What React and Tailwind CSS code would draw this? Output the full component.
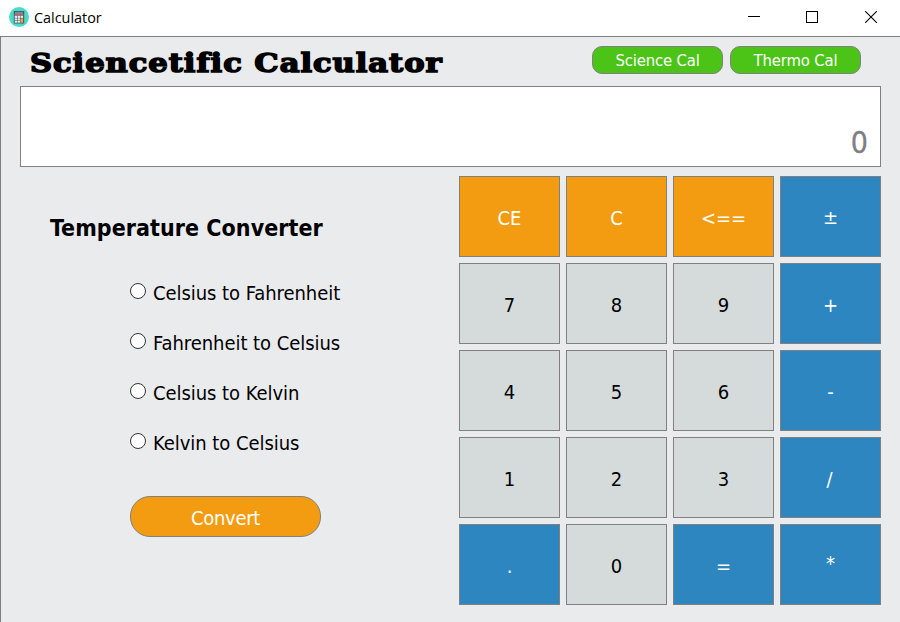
const TONES = {
  orange: 'bg-[#f39c12] text-white',
  gray: 'bg-[#d5dbdb] text-black',
  blue: 'bg-[#2e86c1] text-white',
};

const KEYS = [
  ['CE', 'orange'], ['C', 'orange'], ['<==', 'orange'], ['±', 'blue'],
  ['7', 'gray'], ['8', 'gray'], ['9', 'gray'], ['+', 'blue'],
  ['4', 'gray'], ['5', 'gray'], ['6', 'gray'], ['-', 'blue'],
  ['1', 'gray'], ['2', 'gray'], ['3', 'gray'], ['/', 'blue'],
  ['.', 'blue'], ['0', 'gray'], ['=', 'blue'], ['*', 'blue'],
];

// Optical adjustments for glyphs that sit off the button's centre line.
const KEY_NUDGE = {
  '*': 'pb-[4px]',
  '±': 'pb-0',
  '/': 'pt-[2px] pr-[2px]',
};

const CONVERSIONS = [
  'Celsius to Fahrenheit',
  'Fahrenheit to Celsius',
  'Celsius to Kelvin',
  'Kelvin to Celsius',
];

function AppIcon() {
  return (
    <svg width="20" height="20" viewBox="0 0 20 20">
      <circle cx="10" cy="10" r="10" fill="#48dcc8" />
      <rect x="4.8" y="4" width="10.4" height="12.5" rx="0.6" fill="#4d5365" />
      <rect x="6" y="4.8" width="8" height="2.2" fill="#7f8797" />
      <rect x="5.6" y="7.4" width="8.8" height="1" fill="#e0806c" />
      <g fill="#e9ebf0">
        <rect x="5.7" y="8.8" width="2.4" height="2.1" />
        <rect x="8.6" y="8.8" width="2.4" height="2.1" />
        <rect x="11.5" y="8.8" width="2.6" height="2.1" />
        <rect x="5.7" y="11.4" width="2.4" height="1.9" />
        <rect x="8.6" y="11.4" width="2.4" height="1.9" />
        <rect x="5.7" y="13.8" width="2.4" height="1.9" />
        <rect x="8.6" y="13.8" width="2.4" height="1.9" />
      </g>
      <rect x="11.5" y="11.4" width="2.6" height="4.3" fill="#f0a63c" />
    </svg>
  );
}

function WindowControls() {
  return (
    <div className="flex items-center">
      <svg width="12" height="12" viewBox="0 0 12 12" className="mr-[46px]" stroke="#000" fill="none">
        <path d="M0 5.5H12" />
      </svg>
      <svg width="12" height="12" viewBox="0 0 12 12" className="mr-[47px]" stroke="#000" fill="none">
        <rect x="0.5" y="0.5" width="11" height="11" />
      </svg>
      <svg width="12" height="12" viewBox="0 0 12 12" stroke="#000" strokeWidth="1.1" fill="none">
        <path d="M0.2 0.2L11.8 11.8M11.8 0.2L0.2 11.8" />
      </svg>
    </div>
  );
}

function ModeButton({ children }) {
  return (
    <button className="flex h-7 w-[131px] items-center justify-center rounded-[10px] border border-[#808080] bg-[#4bc417] pt-[2px] text-[16.5px] leading-none tracking-[-0.15px] text-white">
      {children}
    </button>
  );
}

export default function App() {
  return (
    <div className="flex h-[622px] w-[900px] flex-col overflow-hidden bg-white font-['DejaVu_Sans_Condensed','DejaVu_Sans',sans-serif] [font-stretch:condensed]">
      <header className="flex h-9 shrink-0 items-center justify-between pr-[23px] pb-[2px] pl-[9px]">
        <div className="flex items-center gap-[5px]">
          <AppIcon />
          <span className="pt-[2px] font-['Open_Sans',sans-serif] text-[14.4px] leading-5 [font-stretch:normal]">Calculator</span>
        </div>
        <WindowControls />
      </header>

      <main className="flex flex-1 flex-col border-t border-l border-[#808080] bg-[#eaebed] pr-[19px] pl-[19px]">
        <div className="flex h-[49px] shrink-0 items-start justify-between pr-5">
          <h1 className="mt-[10px] ml-[10px] origin-left scale-x-[1.175] font-['DejaVu_Serif',serif] text-[26px] leading-8 font-bold tracking-[0.83px] whitespace-nowrap text-black [-webkit-text-stroke:1.5px_#000] [font-stretch:normal] [font-variant-ligatures:none]">
            Sciencetific Calculator
          </h1>
          <div className="mt-[9px] flex gap-[7px]">
            <ModeButton>Science Cal</ModeButton>
            <ModeButton>Thermo Cal</ModeButton>
          </div>
        </div>

        <div className="flex h-[81px] shrink-0 items-end justify-end border border-[#808080] bg-white pr-3 pb-[7px] text-[30px] leading-8 text-[#808080] [-webkit-text-stroke:0.3px_#808080]">
          0
        </div>

        <div className="flex justify-between pt-[9px]">
          <section className="flex flex-col pt-[37px] pl-[30px]">
            <h2 className="text-[23px] leading-[30px] font-bold tracking-[0.05px] whitespace-nowrap text-black">
              Temperature Converter
            </h2>
            <div className="mt-[35px] flex flex-col gap-[20px] pl-[80px]">
              {CONVERSIONS.map((name) => (
                <label key={name} className="flex h-[30px] items-center gap-[7px] whitespace-nowrap">
                  <span className="mb-[5px] size-4 rounded-full border border-[#333] bg-white" />
                  <span className="text-[20px] leading-[30px] tracking-[-0.05px] text-black">{name}</span>
                </label>
              ))}
            </div>
            <button className="mt-[38px] ml-[80px] flex h-[41px] w-[191px] items-center justify-center rounded-[20px] border border-[#808080] bg-[#f39c12] pt-[2px] text-[20px] leading-none tracking-[-0.3px] text-white">
              Convert
            </button>
          </section>

          <section className="grid grid-cols-[repeat(4,101px)] grid-rows-[repeat(5,81px)] gap-[6px]">
            {KEYS.map(([label, tone]) => (
              <button
                key={label}
                className={`flex items-center justify-center border border-[#808080] text-[20px] leading-none ${KEY_NUDGE[label] ?? 'pt-[2px]'} ${TONES[tone]}`}
              >
                {label}
              </button>
            ))}
          </section>
        </div>
      </main>
    </div>
  );
}
